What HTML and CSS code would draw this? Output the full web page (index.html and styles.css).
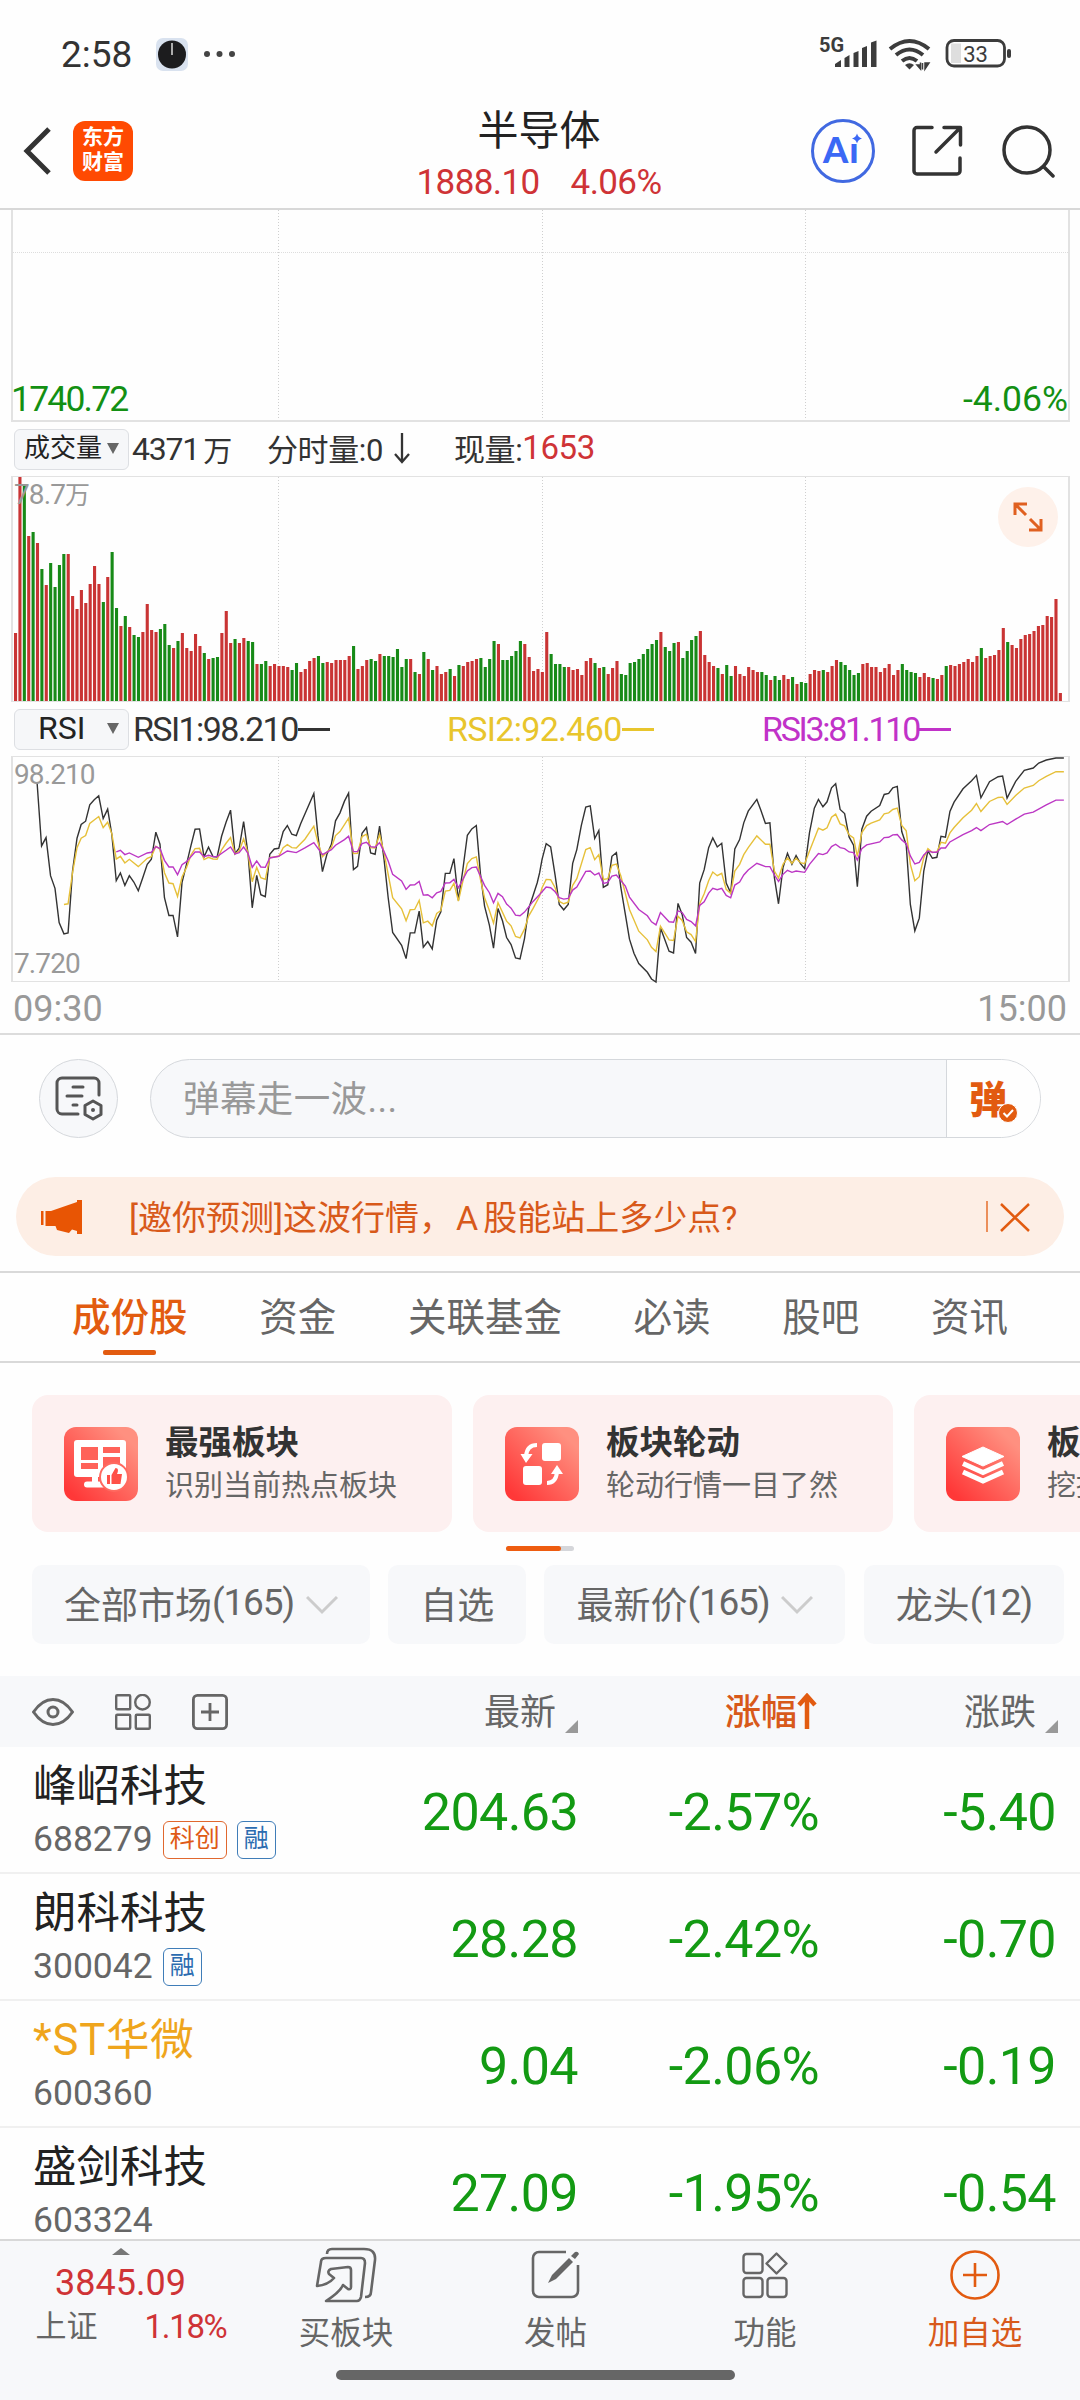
FILE: index.html
```html
<!DOCTYPE html>
<html lang="zh-CN">
<head>
    <meta charset="UTF-8">
    <meta name="viewport" content="width=device-width, initial-scale=1.0">
    <title>半导体</title>
    <link rel="stylesheet" href="styles.css">
</head>
<body>
    <div class="status-bar">
        <span class="clock">2:58</span>
        <svg class="clock-app" width="32" height="33" viewBox="0 0 32 33">
            <rect width="32" height="33" rx="7" fill="#d9e2ef"/>
            <circle cx="16" cy="16.500" r="14" fill="#1c1c1e"/>
            <path d="M16 5v12" stroke="#ddd" stroke-width="1.500"/>
        </svg>
        <svg class="dots" width="34" height="8" viewBox="0 0 34 8" fill="#444">
            <circle cx="4" cy="4" r="3"/><circle cx="16.500" cy="4" r="3"/><circle cx="29" cy="4" r="3"/>
        </svg>
        <svg class="signals" width="196" height="40" viewBox="816 34 196 40">
            <text x="819" y="52" class="net">5G</text>
            <g fill="#3c3c3c">
                <path d="M835 67v-3l6-4v7zM844.500 67v-9l5-3v12zM853.500 67V53l5-2v16zM862 67V48l5-2v21zM871 67V42.500l5.500-2V67z"/>
            </g>
            <g fill="none" stroke="#3c3c3c" stroke-width="4">
                <path d="M890 49q19.500-16 39 0M896 55q13.500-11 27 0M902 61q7.500-6 15 0"/>
            </g>
            <path d="M905 65q4.500-3.500 9 0l-4.500 4.500z" fill="#3c3c3c"/>
            <path d="M917 65h3.500v-2.500V69zM922.500 63v6.500M925 69v-6h4z" stroke="#3c3c3c" stroke-width="1.500" fill="#3c3c3c"/>
            <path d="M951 43.500h10v19.500h-10z" fill="#dedede"/>
            <rect x="947" y="40.500" width="57.500" height="25.500" rx="7" fill="none" stroke="#3c3c3c" stroke-width="2.800"/>
            <rect x="1007" y="49" width="4" height="9" rx="2" fill="#3c3c3c"/>
            <text x="975.500" y="61.500" class="battery">33</text>
        </svg>
    </div>

    <header class="header">
        <div class="header-left">
            <svg width="30" height="52" viewBox="0 0 30 52"><path d="M26 4L4 26l22 22" fill="none" stroke="#333" stroke-width="5"/></svg>
            <div class="brand">东方<br>财富</div>
        </div>
        <div class="header-title">
            <h1>半导体</h1>
            <p><span>1888.10</span><span>4.06%</span></p>
        </div>
        <div class="header-right">
            <svg width="64" height="64" viewBox="0 0 64 64">
                <circle cx="32" cy="32" r="30.500" fill="none" stroke="#4169e1" stroke-width="3"/>
                <text x="12" y="44" class="ai-text">A<tspan dx="1">ı</tspan></text>
                <path d="M46 14.500q1 4 5 5-4 1-5 5-1-4-5-5 4-1 5-5z" fill="#3b68f5"/>
            </svg>
            <svg width="54" height="54" viewBox="0 0 54 54" fill="none" stroke="#333" stroke-width="3.500" stroke-linecap="round" stroke-linejoin="round">
                <path d="M21 3.500H6a3 3 0 0 0-3 3V47a3 3 0 0 0 3 3h40a3 3 0 0 0 3-3V34M33 3.500h16.500V21M49 4L25 28"/>
            </svg>
            <svg width="54" height="56" viewBox="0 0 54 56" fill="none" stroke="#333" stroke-width="3.500" stroke-linecap="round">
                <circle cx="26" cy="27" r="23"/><path d="M43 44l9 9"/>
            </svg>
        </div>
    </header>

    <section class="charts">
        <div class="price-chart grid-lines">
            <span class="low">1740.72</span><span>-4.06%</span>
        </div>
        <div class="legend">
            <div class="picker">成交量<i></i></div>
            <span class="vol-total">4371<b>万</b></span>
            <span class="vol-min">分时量:0<svg width="18" height="32" viewBox="0 0 18 32"><path d="M9 1v29M2 22l7 8 7-8" fill="none" stroke="#333" stroke-width="2.300"/></svg></span>
            <span class="vol-now">现量:<em>1653</em></span>
        </div>
        <div class="plot grid-lines">
            <svg id="volume" width="1055" height="224" viewBox="0 0 1055 224"></svg>
            <span class="scale-top">78.7<b>万</b></span>
            <div class="expand">
                <svg width="32" height="32" viewBox="0 0 32 32" fill="none" stroke="#e06020" stroke-width="3"><path d="M3 14V3h12M3 3l11 11M29 18v11H17M29 29L18 18"/></svg>
            </div>
        </div>
        <div class="legend rsi">
            <div class="picker">RSI<i></i></div>
            <span class="rsi-1">RSI1:98.210<u></u></span>
            <span class="rsi-2">RSI2:92.460<u></u></span>
            <span class="rsi-3">RSI3:81.110<u></u></span>
        </div>
        <div class="plot grid-lines rsi-plot">
            <svg id="rsi" width="1055" height="225" viewBox="38 169 3065 673" preserveAspectRatio="none">
                <polyline class="line-1" points="108,246 121,435 134,410 147,524 160,562 172,664 186,698 198,695 211,510 224,412 236,371 249,361 261,312 274,297 287,285 300,353 313,325 325,400 338,539 350,516 363,553 376,524 389,543 402,569 415,530 428,490 440,475 453,394 465,430 478,590 491,643 503,643 516,707 529,545 542,490 555,434 567,385 580,384 593,468 606,439 619,467 631,468 644,406 657,364 670,328 683,458 695,442 708,362 721,460 733,620 746,523 758,581 771,587 784,460 797,444 810,442 823,392 835,374 848,400 861,404 874,368 912,278 924,405 937,512 950,460 963,430 975,360 988,336 1001,301 1013,277 1027,506 1039,496 1052,397 1065,380 1077,456 1090,460 1103,376 1116,475 1128,590 1141,694 1167,732 1180,772 1192,695 1205,695 1218,630 1230,738 1243,721 1256,743 1269,657 1281,632 1294,517 1307,517 1319,473 1332,598 1345,505 1358,403 1371,384 1384,374 1396,518 1408,615 1422,672 1434,741 1447,622 1460,659 1472,709 1485,730 1498,770 1511,773 1524,712 1536,623 1549,583 1561,545 1568,515 1575,475 1587,428 1600,438 1613,523 1625,610 1638,626 1651,610 1664,487 1676,446 1689,374 1702,319 1715,315 1728,413 1740,389 1753,559 1766,551 1778,466 1791,455 1804,560 1817,640 1829,714 1842,756 1856,787 1881,813 1893,833 1906,842 1919,680 1944,750 1957,755 1970,607 1982,640 1995,709 2008,723 2021,757 2033,546 2046,506 2059,440 2071,411 2084,438 2097,427 2110,546 2123,575 2135,444 2149,416 2161,366 2174,331 2199,296 2211,329 2224,368 2237,366 2250,530 2262,608 2275,500 2288,457 2301,490 2313,464 2326,488 2338,503 2352,395 2366,322 2378,296 2391,318 2403,303 2416,261 2428,249 2441,326 2454,338 2467,408 2480,433 2491,557 2504,385 2518,346 2531,331 2556,314 2569,281 2582,278 2594,261 2607,257 2620,392 2633,432 2645,610 2658,689 2671,651 2684,510 2696,450 2709,472 2722,469 2734,406 2747,409 2760,332 2772,304 2798,264 2823,240 2837,224 2850,291 2875,243 2900,228 2913,226 2926,292 2951,242 2976,209 3002,202 3018,187 3040,178 3068,172 3091,172"/>
                <polyline class="line-2" points="186,610 198,608 211,515 224,440 236,412 249,404 261,368 287,347 300,380 313,364 325,398 338,474 350,466 363,486 376,475 402,497 428,472 440,467 453,436 465,445 478,515 491,546 503,548 516,586 529,528 542,500 555,462 567,443 580,442 593,476 606,469 619,474 631,475 644,447 657,427 670,410 683,459 695,450 708,414 721,457 733,542 746,499 758,530 771,535 784,470 810,466 823,440 835,431 848,440 861,441 886,415 912,376 924,425 937,467 963,440 975,404 988,392 1013,352 1027,458 1039,457 1052,407 1065,400 1077,440 1090,441 1103,401 1116,455 1128,520 1141,590 1167,623 1180,659 1192,626 1205,625 1218,598 1230,665 1243,660 1256,674 1269,637 1281,628 1294,570 1307,568 1319,547 1332,600 1345,540 1358,488 1371,473 1384,468 1396,535 1408,590 1422,628 1434,666 1447,605 1472,660 1485,674 1498,706 1511,710 1524,684 1536,645 1549,622 1568,585 1575,560 1587,535 1600,536 1613,560 1625,601 1638,608 1651,603 1664,553 1676,533 1702,446 1715,440 1728,476 1740,461 1753,535 1766,533 1778,493 1791,489 1804,525 1829,625 1856,690 1881,716 1893,738 1906,751 1919,675 1944,716 1957,718 1970,645 1982,658 1995,692 2008,700 2021,721 2033,608 2046,578 2059,539 2071,513 2084,524 2097,517 2110,565 2123,577 2135,510 2149,490 2161,461 2174,440 2199,405 2224,430 2237,430 2250,510 2262,531 2275,490 2288,471 2301,487 2313,472 2326,485 2338,488 2352,450 2378,382 2391,388 2403,381 2416,349 2428,340 2441,369 2454,375 2467,402 2480,411 2491,466 2504,395 2518,374 2531,367 2556,357 2569,339 2582,336 2594,326 2607,322 2620,374 2633,390 2645,490 2658,539 2671,527 2684,470 2696,443 2709,455 2722,453 2734,424 2747,427 2760,396 2772,380 2798,351 2823,328 2837,308 2850,332 2875,302 2900,290 2913,289 2926,311 2951,284 2976,262 3002,254 3018,240 3040,227 3068,213 3091,213"/>
                <polyline class="line-3" points="338,453 350,448 363,461 376,456 402,469 428,456 440,454 453,437 465,443 478,478 491,498 503,498 516,521 529,491 542,482 567,453 580,453 593,467 606,463 619,467 631,467 657,448 670,438 683,459 695,455 708,438 721,458 733,499 746,480 758,498 771,499 784,471 810,466 835,450 861,455 886,441 912,425 937,461 963,446 975,433 1001,416 1013,406 1027,452 1039,452 1052,428 1065,424 1077,437 1090,439 1103,425 1116,452 1128,480 1141,520 1167,540 1180,565 1192,552 1205,551 1218,541 1230,582 1243,581 1256,590 1269,575 1281,571 1294,546 1307,545 1319,535 1332,560 1358,510 1371,500 1384,498 1408,553 1422,575 1434,605 1447,577 1460,587 1472,609 1485,621 1498,642 1511,644 1524,633 1549,601 1568,580 1587,558 1600,560 1613,572 1625,590 1638,594 1651,592 1664,567 1676,558 1702,511 1715,510 1728,522 1740,516 1753,547 1766,544 1778,525 1791,522 1817,555 1829,588 1856,625 1881,644 1893,662 1906,671 1919,634 1944,662 1957,663 1970,629 1982,634 1995,655 2008,661 2021,674 2033,613 2046,602 2059,576 2071,562 2084,566 2097,562 2110,583 2123,590 2135,552 2149,543 2161,522 2174,507 2199,487 2224,497 2237,497 2250,522 2262,541 2275,520 2288,508 2301,514 2313,510 2338,514 2352,490 2378,458 2391,461 2403,456 2416,437 2428,430 2441,440 2454,443 2467,453 2480,455 2491,477 2504,443 2518,432 2556,423 2569,410 2582,409 2594,402 2607,401 2620,417 2633,428 2645,465 2658,489 2671,484 2684,462 2696,450 2709,454 2722,454 2734,441 2747,441 2760,423 2798,401 2823,389 2837,380 2850,389 2875,371 2913,362 2926,371 2951,355 2976,340 3002,334 3040,312 3068,298 3091,298"/>
            </svg>
            <span class="scale-top">98.210</span>
            <span class="scale-bottom">7.720</span>
        </div>
        <div class="times"><span>09:30</span><span>15:00</span></div>
    </section>

    <section class="comment">
        <div class="comment-settings">
            <svg width="50" height="46" viewBox="0 0 50 46" fill="none" stroke="#555" stroke-width="3" stroke-linecap="round">
                <path d="M24 38H8a5 5 0 0 1-5-5V7a5 5 0 0 1 5-5h32a5 5 0 0 1 5 5v12M19 11h10M13 20h15M19 29h4"/>
                <path d="M39 25l8 4.500v9L39 43l-8-4.500v-9z" stroke-linejoin="round"/><circle cx="39" cy="34" r="2" fill="#555" stroke="none"/>
            </svg>
        </div>
        <div class="comment-box">
            <span>弹幕走一波...</span>
            <div class="barrage">弹<svg width="20" height="20" viewBox="0 0 20 20"><circle cx="10" cy="10" r="9.500" fill="#e25b10" stroke="#fff"/><path d="M5.500 10l3.500 3.500 6-6.500" fill="none" stroke="#fff" stroke-width="2"/></svg></div>
        </div>
    </section>

    <section class="notice">
        <svg width="41" height="34" viewBox="0 0 41 34" fill="#e85504"><path d="M0 11h2.500v14H0zM4.500 11h5.500L36 2V0h5v34h-5v-3l-5-1.500L28 33l-12-3-1.500-4H4.500z"/></svg>
        <p>[邀你预测]这波行情，<span>A</span>股能站上多少点?</p>
        <svg class="close" width="44" height="34" viewBox="0 0 44 34" fill="none" stroke="#e25b10"><path d="M1 1v31" stroke-width="1.300"/><path d="M15 4l28 27M43 4L15 31" stroke-width="2.500"/></svg>
    </section>

    <nav class="tabs">
        <a class="active">成份股</a><a>资金</a><a>关联基金</a><a>必读</a><a>股吧</a><a>资讯</a>
    </nav>

    <section class="cards">
        <div class="card">
            <svg width="74" height="74" viewBox="0 0 74 74">
                <defs><linearGradient id="red" x1="0" y1="1" x2="1" y2="0"><stop offset=".1" stop-color="#ff3838"/><stop offset=".85" stop-color="#ff9080"/></linearGradient></defs>
                <rect width="74" height="74" rx="12" fill="url(#red)"/>
                <path d="M13 13h46a3 3 0 0 1 3 3v34H13a3 3 0 0 1-3-3V16a3 3 0 0 1 3-3z" fill="#fff"/>
                <path d="M17 20h17v13H17zM39 20h17v6H39zM17 36h17v6H17zM39 30h17v12H39z" fill="#ff6259"/>
                <path d="M31 49v7M23 57.500h16" stroke="#fff" stroke-width="6" stroke-linecap="round"/>
                <circle cx="50" cy="50" r="14" fill="#fff" stroke="#ff6a60" stroke-width="2"/>
                <path d="M43 48h3v9h-3zM47.500 48l4-7c3 0 3 3 1.500 6h5l-1.500 10h-9z" fill="#ff5148"/>
            </svg>
            <div><h3>最强板块</h3><p>识别当前热点板块</p></div>
        </div>
        <div class="card">
            <svg width="74" height="74" viewBox="0 0 74 74">
                <rect width="74" height="74" rx="12" fill="url(#red)"/>
                <rect x="37" y="16" width="19" height="18" rx="3" fill="#fff"/><rect x="18" y="39" width="19" height="19" rx="3" fill="#fff"/>
                <path d="M32 18q-10 0-11 11M42 56q9 0 10-11" fill="none" stroke="#fff" stroke-width="4"/><path d="M15.500 27h12L21 36zM46 47h12l-6-9z" fill="#fff"/>
            </svg>
            <div><h3>板块轮动</h3><p>轮动行情一目了然</p></div>
        </div>
        <div class="card card-cut">
            <svg width="74" height="74" viewBox="0 0 74 74">
                <rect width="74" height="74" rx="12" fill="url(#red)"/>
                <path d="M37 20l21 9.500L37 39 16 29.500z" fill="#fff" stroke="#fff" stroke-linejoin="round"/>
                <path d="M17 36.500l20 9 20-9M17 45l20 9 20-9" fill="none" stroke="#fff" stroke-width="5"/>
            </svg>
            <div><h3>板</h3><p>挖掘</p></div>
        </div>
    </section>
    <div class="scroll-mark"><i></i></div>

    <section class="chips">
        <div class="chip">全部市场<span>(165)</span><svg width="32" height="20" viewBox="0 0 32 20"><path d="M1 2l15 15L31 2" fill="none" stroke="#ccc" stroke-width="3"/></svg></div>
        <div class="chip">自选</div>
        <div class="chip">最新价<span>(165)</span><svg width="32" height="20" viewBox="0 0 32 20"><path d="M1 2l15 15L31 2" fill="none" stroke="#ccc" stroke-width="3"/></svg></div>
        <div class="chip">龙头<span>(12)</span></div>
    </section>

    <section class="stocks">
        <div class="row row-head">
            <div class="tools">
                <svg width="42" height="28" viewBox="0 0 42 28" fill="none" stroke="#666" stroke-width="3"><path d="M1.500 14Q10 1.500 21 1.500T40.500 14Q32 26.500 21 26.500T1.500 14z" stroke-linejoin="round"/><circle cx="21" cy="14" r="5"/></svg>
                <svg width="36" height="36" viewBox="0 0 36 36" fill="none" stroke="#666" stroke-width="2.400"><rect x="1.200" y="1.200" width="14" height="14" rx="1"/><circle cx="27.500" cy="8.200" r="7.300"/><rect x="1.200" y="20.800" width="14" height="14" rx="1"/><rect x="20.800" y="20.800" width="14" height="14" rx="1"/></svg>
                <svg width="36" height="36" viewBox="0 0 36 36" fill="none" stroke="#666" stroke-width="2.800"><rect x="1.400" y="1.400" width="33.200" height="33.200" rx="4"/><path d="M9 18h18M18 9v18"/></svg>
            </div>
            <span class="sort">最新<i></i></span>
            <span class="sort up">涨幅<svg width="20" height="36" viewBox="0 0 20 36"><path d="M10 36V4M2 12l8-9 8 9" fill="none" stroke="#e25b10" stroke-width="4.500"/></svg></span>
            <span class="sort">涨跌<i></i></span>
        </div>
        <div class="row">
            <div class="stock"><h2>峰岹科技</h2><p>688279<b class="kc">科创</b><b>融</b></p></div>
            <span>204.63</span><span>-2.57%</span><span>-5.40</span>
        </div>
        <div class="row">
            <div class="stock"><h2>朗科科技</h2><p>300042<b>融</b></p></div>
            <span>28.28</span><span>-2.42%</span><span>-0.70</span>
        </div>
        <div class="row">
            <div class="stock st"><h2>*ST华微</h2><p>600360</p></div>
            <span>9.04</span><span>-2.06%</span><span>-0.19</span>
        </div>
        <div class="row">
            <div class="stock"><h2>盛剑科技</h2><p>603324</p></div>
            <span>27.09</span><span>-1.95%</span><span>-0.54</span>
        </div>
    </section>

    <footer class="bottom-bar">
        <div class="index">
            <i></i>
            <strong>3845.09</strong>
            <p><span>上证</span><em>1.18%</em></p>
        </div>
        <div class="action">
            <svg width="62" height="56" viewBox="0 0 62 56" fill="none" stroke="#666" stroke-width="2.600" stroke-linejoin="round">
                <path d="M12 7q0-5 5-5h32q12 0 11 11l-4 32q0 5-6 5"/>
                <path d="M6 15q0-4 5-4h35q4 0 4 5l-4 34q-1 4-4 4H11q14-9 17-16l5 4q3 1 3-2V23q0-3-3-3l-17 2q-4 2-2 5l5 4q-6 7-17 8z"/>
            </svg>
            <span>买板块</span>
        </div>
        <div class="action">
            <svg width="50" height="50" viewBox="0 0 50 50" fill="none" stroke="#666" stroke-width="2.600">
                <path d="M35 2H8a6 6 0 0 0-6 6v33a6 6 0 0 0 6 6h33a6 6 0 0 0 6-6V15"/>
                <path d="M38 8l4 4-17 17-8 4 4-8zM40 6l4-4q3-1 4 2l-4 5z" fill="#666" stroke="none"/>
            </svg>
            <span>发帖</span>
        </div>
        <div class="action">
            <svg width="46" height="48" viewBox="0 0 46 48" fill="none" stroke="#666" stroke-width="2.400" stroke-linejoin="round">
                <rect x="1.500" y="3" width="19" height="19" rx="3"/><path d="M34.500 2.500l10 10-10 10-10-10z"/><rect x="1.500" y="27" width="19" height="19" rx="3"/><rect x="25.500" y="27" width="19" height="19" rx="3"/>
            </svg>
            <span>功能</span>
        </div>
        <div class="action add">
            <svg width="50" height="50" viewBox="0 0 50 50" fill="none" stroke="#e25b10" stroke-width="2.600"><circle cx="25" cy="25" r="23.500"/><path d="M13 25h24M25 13v24"/></svg>
            <span>加自选</span>
        </div>
        <div class="home-line"></div>
    </footer>

    <script>
// One entry per minute: r = up, g = down, number = bar height
const volumes = `r68 r224 g217 r165 g169 r158 g132 r116 g138 g114 g136 g147 r147 r105 r92 r111 r98 r117 r135 r117
g99 r124 g149 g93 r75 g85 r74 g66 g64 r69 r97 r71 r69 g72 g77 g56 r53 g60 r68 r53
r50 r67 r55 g48 r42 g43 g44 r68 r90 r58 g62 r58 r63 g60 g59 r37 g37 g40 r35 r37
r35 r35 r34 g31 g38 r29 r32 r40 r43 g45 g38 r39 r38 r41 r41 r41 r45 g55 r32 r35
r41 g42 g40 r47 g45 g45 g44 g52 g34 g42 r42 g29 r27 g49 r42 g31 r35 r27 r29 g32
r25 g36 r35 r39 r40 r42 g43 g34 g42 g60 r57 g41 g41 g45 g50 g60 r57 r44 r30 r32
r29 r69 g47 g37 g37 g34 r34 r31 r32 r26 r40 r43 g38 r33 g34 r27 r33 r40 g27 g26
g38 g39 g42 g47 g52 g57 g61 r69 g54 g50 g58 r59 g43 g50 g61 g65 r70 r46 r39 r35
g33 r27 g36 g25 r35 r27 r25 r34 r31 r29 g29 g26 r21 g25 g21 r26 r22 g24 r17 g19
g18 r27 r31 r30 g31 r29 r35 r41 g39 g36 g31 g26 g28 r37 r38 r34 r34 r29 r33 r37
r26 r31 g37 g31 g29 g28 r24 r28 r24 g23 r22 r26 g35 r36 r35 r37 r39 r42 r39 r45
g53 r43 r45 r46 r51 r73 g59 r56 r53 r62 r66 r67 r70 r75 r76 r85 r84 r102 r8`.split(/\s+/);

const step = 4.39;
document.getElementById("volume").innerHTML = volumes.map((v, i) => {
    const height = Number(v.slice(1));
    const color = v[0] === "r" ? "#c93434" : "#178a17";
    return `<rect x="${(1 + i * step).toFixed(2)}" y="${224 - height}" width="3.1" height="${height}" fill="${color}"/>`;
}).join("");
    </script>
</body>
</html>
```
FILE: styles.css
```css
* {
    box-sizing: border-box;
}

body {
    margin: 0;
    width: 1080px;
    height: 2400px;
    overflow: hidden;
    background-color: #fefefe;
    color: #333;
    font-family: Roboto, "Noto Sans CJK SC", sans-serif;
    display: flex;
    flex-direction: column;
}

body > * {
    flex-shrink: 0;
}

h1, h2, h3, p {
    margin: 0;
    font-weight: 400;
}

svg {
    display: block;
    flex-shrink: 0;
}

i, em {
    font-style: normal;
}

b {
    font-weight: 400;
}

.status-bar {
    height: 92px;
    padding: 16px 68px 0 61px;
    display: flex;
    align-items: center;
}

.clock {
    font-size: 37px;
    font-weight: 400;
    width: 95px;
    color: #333;
}

.dots {
    margin-left: 15px;
}

.signals {
    margin-left: auto;
}

.net {
    font-size: 20px;
    font-weight: 700;
    fill: #3c3c3c;
}

.battery {
    font-size: 22px;
    text-anchor: middle;
    fill: #3c3c3c;
}

.header {
    height: 118px;
    padding: 2px 25px 0 23px;
    border-bottom: 2px solid #d8d8d8;
    display: grid;
    grid-template-columns: 1fr 260px 1fr;
    align-items: center;
}

.header-left {
    display: flex;
    align-items: center;
    gap: 20px;
}

.brand {
    width: 60px;
    height: 60px;
    border-radius: 12px;
    background-color: #ff4a02;
    color: #fff;
    font-size: 21px;
    font-weight: 700;
    line-height: 25px;
    text-align: center;
    padding-top: 4px;
}

.header-title {
    padding-top: 10px;
    text-align: center;
}

.header-title h1 {
    font-size: 41px;
    line-height: 54px;
    color: #222;
}

.header-title p {
    display: flex;
    justify-content: center;
    gap: 31px;
    font-size: 35px;
    line-height: 50px;
    letter-spacing: -0.6px;
    color: #cf3336;
}

.header-right {
    display: flex;
    justify-content: flex-end;
    align-items: center;
    gap: 36px;
}

.ai-text {
    font-family: Lato, sans-serif;
    font-size: 36px;
    font-weight: 900;
    fill: #3b68f5;
}

.charts {
    height: 825px;
    border-bottom: 2px solid #dcdcdc;
}

/* quarter-day dotted lines shared by the three charts */
.grid-lines {
    width: 1059px;
    margin-left: 11px;
    border: 2px solid #e2e2e2;
    background-image:
        repeating-linear-gradient(to bottom, transparent 0 1px, #fefefe 1px 3px),
        linear-gradient(#cfcfcf, #cfcfcf), linear-gradient(#cfcfcf, #cfcfcf), linear-gradient(#cfcfcf, #cfcfcf);
    background-size: auto, 1px 100%, 1px 100%, 1px 100%;
    background-position: 0 0, 265px 0, 529px 0, 792px 0;
    background-repeat: repeat, no-repeat, no-repeat, no-repeat;
}

.price-chart {
    position: relative;
    height: 212px;
    border-top: 0;
    display: flex;
    justify-content: space-between;
    align-items: flex-end;
    font-size: 35.5px;
    line-height: 41px;
    color: #139013;
}

.price-chart .low {
    margin-left: -2px;
    letter-spacing: -1.8px;
}

.price-chart::before {
    content: "";
    position: absolute;
    left: 0;
    right: 0;
    top: 42px;
    border-top: 1px dotted #ddd;
}

.legend {
    height: 54px;
    padding-left: 14px;
    display: grid;
    grid-template-columns: 118px 135px 187px 1fr;
    align-items: center;
    font-size: 32px;
    letter-spacing: -1.2px;
}

.legend.rsi {
    grid-template-columns: 119px 314px 315px 1fr;
    font-size: 34px;
}

.picker {
    width: 115px;
    height: 41px;
    padding: 0 9px;
    border: 1px solid #dddfe3;
    border-radius: 6px;
    background-color: #f6f7f9;
    display: flex;
    justify-content: space-between;
    align-items: center;
    font-size: 26px;
    letter-spacing: 0;
    line-height: 34px;
    padding-bottom: 2px;
    color: #222;
}

.rsi .picker {
    padding-left: 23px;
    font-size: 32px;
}

.picker i {
    border: 6.5px solid transparent;
    border-top: 11px solid #666;
    border-bottom: 0;
}

.legend span {
    display: flex;
    align-items: center;
    white-space: nowrap;
}

.vol-total b {
    margin-left: 4px;
    font-size: 29px;
}

.legend .vol-min, .legend .vol-now {
    padding-bottom: 3px;
    font-size: 31px;
    letter-spacing: -0.4px;
}

.vol-min svg {
    margin-left: 10px;
}

.vol-now em {
    color: #cf3336;
    font-size: 33px;
}

.legend u {
    width: 32px;
    border-top: 3px solid currentColor;
}

.rsi-1 {
    letter-spacing: -1.6px;
}

.rsi-2 {
    letter-spacing: -0.7px;
    color: #e8c52c;
}

.rsi-3 {
    letter-spacing: -2.3px;
    color: #c132c8;
}

.plot {
    position: relative;
    height: 226px;
    border-top-width: 1px;
    border-bottom-width: 1px;
}

.rsi-plot {
    height: 226px;
}

.scale-top, .scale-bottom {
    position: absolute;
    left: 1px;
    font-size: 28px;
    line-height: 34px;
    letter-spacing: -0.9px;
    color: #999;
}

.scale-top {
    top: 1px;
}

.scale-top b {
    font-size: 25px;
}

.scale-bottom {
    bottom: 0;
}

.expand {
    position: absolute;
    right: 10px;
    top: 10px;
    width: 60px;
    height: 60px;
    border-radius: 50%;
    background-color: #fef1ea;
    display: flex;
    justify-content: center;
    align-items: center;
}

#rsi {
    overflow: visible;
}

#rsi polyline {
    fill: none;
    stroke-width: 1.4px;
    vector-effect: non-scaling-stroke;
}

.line-1 {
    stroke: #333;
}

.line-2 {
    stroke: #e6c03a;
}

.line-3 {
    stroke: #bc37c4;
}

.times {
    height: 52px;
    padding: 2px 13px 0;
    display: flex;
    justify-content: space-between;
    align-items: center;
    font-size: 36px;
    color: #999;
}

.comment {
    height: 142px;
    padding: 24px 39px 0;
    display: flex;
    gap: 32px;
}

.comment-settings {
    width: 79px;
    height: 79px;
    border: 1px solid #d5d8dc;
    border-radius: 50%;
    background-color: #f7f8fa;
    display: flex;
    justify-content: center;
    align-items: center;
}

.comment-box {
    flex: 1;
    height: 79px;
    border: 1px solid #d5d8dc;
    border-radius: 40px;
    background-color: #f7f8fa;
    overflow: hidden;
    display: flex;
    justify-content: space-between;
    align-items: center;
    padding-left: 32px;
    font-size: 36.5px;
    color: #999;
}

.comment-box > span {
    padding-bottom: 4px;
    letter-spacing: 0.4px;
}

.barrage {
    width: 94px;
    height: 79px;
    padding: 0 0 5px 22px;
    border-left: 1px solid #d5d8dc;
    background-color: #fefefe;
    display: flex;
    align-items: center;
    font-size: 38px;
    font-weight: 900;
    color: #e25b10;
}

.barrage svg {
    margin: 34px 0 0 -9px;
}

.notice {
    height: 79px;
    margin: 0 16px 15px;
    padding: 0 18px 0 25px;
    border-radius: 40px;
    background-color: #fdeee5;
    display: flex;
    align-items: center;
    font-size: 34px;
    color: #d8591a;
}

.notice p {
    margin-left: 47px;
    padding-bottom: 2px;
}

.notice p span {
    margin: 0 5px 0 3px;
}

.close {
    margin-left: auto;
    margin-right: 16px;
}

.tabs {
    height: 92px;
    padding: 0 72px;
    border-top: 2px solid #d9d9d9;
    border-bottom: 2px solid #d9d9d9;
    display: flex;
    justify-content: space-between;
    font-size: 38.5px;
    line-height: 90px;
    color: #666;
}

.tabs .active {
    color: #e25b10;
    font-weight: 500;
    display: flex;
    flex-direction: column;
    align-items: center;
}

.tabs .active::after {
    content: "";
    width: 53px;
    height: 5px;
    margin-top: -13px;
    border-radius: 2px;
    background-color: #e25b10;
}

.cards {
    padding: 32px 0 0 32px;
    display: flex;
    gap: 21px;
}

.card {
    width: 420px;
    height: 137px;
    padding-left: 32px;
    border-radius: 16px;
    background-color: #fdf0f0;
    flex-shrink: 0;
    display: flex;
    align-items: center;
    gap: 27px;
    white-space: nowrap;
    overflow: hidden;
}

.card-cut {
    width: 166px;
    border-radius: 16px 0 0 16px;
}

.card h3 {
    font-size: 33.5px;
    font-weight: 700;
    line-height: 44px;
}

.card p {
    font-size: 29px;
    line-height: 42px;
    color: #666;
}

.scroll-mark {
    width: 68px;
    height: 5px;
    margin: 14px auto;
    border-radius: 3px;
    background-color: #d5d6da;
}

.scroll-mark i {
    display: block;
    width: 55px;
    height: 5px;
    border-radius: 3px;
    background-color: #ee5c10;
}

.chips {
    padding: 0 16px 0 32px;
    display: flex;
    justify-content: space-between;
}

.chip {
    height: 79px;
    padding: 0 32px 4px;
    border-radius: 10px;
    background-color: #f7f8fa;
    display: flex;
    align-items: center;
    font-size: 37px;
    white-space: nowrap;
    color: #666;
}

.chip span {
    letter-spacing: -1.2px;
}

.chip svg {
    margin: 4px 0 0 12px;
}

.stocks {
    height: 563px;
    margin-top: 32px;
    overflow: hidden;
}

.row {
    height: 127px;
    padding: 0 24px 0 32px;
    border-bottom: 2px solid #f0f0f0;
    display: grid;
    grid-template-columns: 300px 246px 241px 1fr;
    align-items: center;
    text-align: right;
    font-size: 52px;
    letter-spacing: -0.6px;
    color: #139a13;
}

.row > span {
    padding-top: 5px;
}

.row-head {
    height: 71px;
    padding-right: 22px;
    border: 0;
    background-color: #f7f8fa;
    font-size: 36px;
    letter-spacing: 0;
    color: #666;
}

.tools {
    display: flex;
    align-items: center;
    gap: 41px;
}

.row .sort {
    padding: 0 0 5px;
    display: flex;
    justify-content: flex-end;
    align-items: center;
}

.sort i {
    margin: 34px 0 0 9px;
    border-left: 13px solid transparent;
    border-bottom: 13px solid #999;
}

.sort svg {
    margin-top: 4px;
}

.row .sort.up {
    padding-right: 2px;
    color: #d8591a;
    font-weight: 500;
}

.stock {
    text-align: left;
    letter-spacing: 0;
    padding: 4px 0 0 1px;
}

.stock h2 {
    font-size: 43.5px;
    line-height: 54px;
    color: #222;
}

.stock p {
    display: flex;
    align-items: center;
    font-size: 35.5px;
    line-height: 50px;
    color: #666;
}

.stock.st h2 {
    color: #efa51c;
    letter-spacing: 0.8px;
}

.stock b {
    height: 38px;
    margin-left: 10px;
    margin-top: 2px;
    padding: 0 6px;
    border: 1.500px solid #3f7db8;
    border-radius: 6px;
    font-size: 25px;
    line-height: 34px;
    color: #2c6cb0;
}

.stock .kc {
    border-color: #e0672e;
    color: #df5a16;
}

.bottom-bar {
    height: 161px;
    border-top: 2px solid #d8d8d8;
    background-color: #f7f8fa;
    display: grid;
    grid-template-columns: 241px 210px 209px 210px 210px;
    grid-template-rows: 129px 30px;
    color: #666;
}

.index {
    display: flex;
    flex-direction: column;
    align-items: center;
    padding-top: 7px;
    color: #cf3336;
}

.index > i {
    border: 9px solid transparent;
    border-bottom: 7px solid #777;
    border-top: 0;
}

.index strong {
    margin-top: 6px;
    font-size: 36px;
    font-weight: 400;
    line-height: 44px;
}

.index p {
    width: 191px;
    margin-left: 21px;
    display: flex;
    justify-content: space-between;
    font-size: 33px;
    line-height: 43px;
    letter-spacing: -1.3px;
}

.index p span {
    font-size: 31px;
    letter-spacing: 0;
    color: #666;
}

.action {
    display: flex;
    flex-direction: column;
    align-items: center;
    justify-content: space-between;
    padding: 6px 0 9px;
    font-size: 31.5px;
}

.action svg {
    height: 56px;
}

.action span {
    line-height: 54px;
}

.add {
    color: #d8591a;
}

.home-line {
    grid-column: 1 / -1;
    width: 399px;
    height: 10px;
    margin-left: 336px;
    border-radius: 5px;
    background-color: #666;
}
```
